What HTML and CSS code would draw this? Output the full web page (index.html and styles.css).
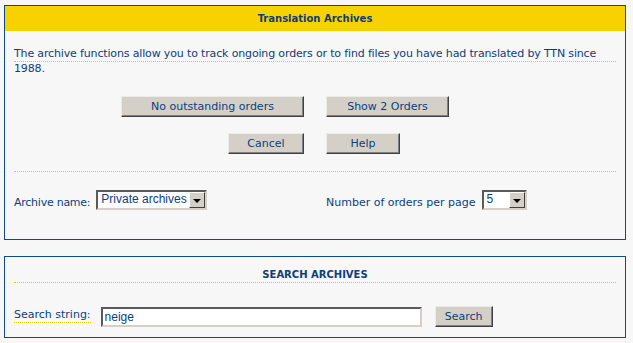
FILE: index.html
```html
<!DOCTYPE html>
<html lang="en">
<head>
    <meta charset="UTF-8">
    <title>Translation Archives</title>
    <link rel="stylesheet" href="styles.css">
</head>
<body>
    <div class="panel">
        <div class="panel-title">Translation Archives</div>
        <div class="panel-body">
            <div class="intro">The archive functions allow you to track ongoing orders or to find files you have had translated by TTN since 1988.</div>

            <div class="actions">
                <button class="btn btn-orders">No outstanding orders</button>
                <button class="btn btn-show">Show 2 Orders</button>
                <button class="btn btn-cancel">Cancel</button>
                <button class="btn btn-help">Help</button>
            </div>

            <div class="options">
                <div class="option">
                    <label class="label-archive">Archive name:</label>
                    <div class="select select-archive">
                        <span class="select-value">Private archives</span>
                        <span class="select-arrow"></span>
                    </div>
                </div>
                <div class="option">
                    <label>Number of orders per page</label>
                    <div class="select select-count">
                        <span class="select-value">5</span>
                        <span class="select-arrow"></span>
                    </div>
                </div>
            </div>
        </div>
    </div>

    <div class="panel panel-search">
        <div class="panel-body">
            <div class="search-title">SEARCH ARCHIVES</div>
            <div class="search-row">
                <label class="search-label">Search string:</label>
                <input type="text" class="search-input" value="neige">
                <button class="btn btn-search">Search</button>
            </div>
        </div>
    </div>
</body>
</html>
```

FILE: styles.css
```css
body {
    margin: 0;
    padding: 5px 0 0 4px;
    background-color: #f7f7f7;
    font-family: "DejaVu Sans", Verdana, sans-serif;
    font-size: 11px;
    color: #0c3e7e;
}
.panel {
    width: 620px;
    border: 1px solid #0a4a94;
}
.panel-title {
    height: 25px;
    line-height: 25px;
    background-color: #f8d200;
    text-align: center;
    font-size: 10px;
    font-weight: bold;
}
.panel-body {
    padding: 0 9px;
}
.intro {
    margin-top: 15px;
    height: 15px;
    line-height: 15px;
    letter-spacing: -0.15px;
    border-bottom: 1px dotted #f0c800;
}
.actions {
    display: grid;
    grid-template-columns: 1fr 1fr;
    column-gap: 22px;
    row-gap: 16px;
    padding: 34px 0 17px;
    border-bottom: 1px dotted #f0c800;
}
.btn {
    height: 21px;
    padding: 0;
    font-family: "DejaVu Sans", Verdana, sans-serif;
    font-size: 11px;
    color: #0c3e7e;
    background-color: #d4d0c8;
    border: 1px solid;
    border-color: #ecebe6 #404040 #404040 #ecebe6;
    box-shadow: inset -1px -1px #808080;
}
.btn-orders { width: 183px; justify-self: end; }
.btn-show { width: 123px; justify-self: start; }
.btn-cancel { width: 76px; justify-self: end; }
.btn-help { width: 74px; justify-self: start; }
.options {
    display: grid;
    grid-template-columns: 1fr 1fr;
    column-gap: 22px;
    padding: 18px 0 29px;
}
.option {
    display: flex;
    align-items: center;
    gap: 6px;
}
.option label {
    padding-top: 4px;
}
.label-archive {
    letter-spacing: -0.25px;
}
.select {
    display: flex;
    height: 20px;
    box-sizing: border-box;
    background-color: #fff;
    border: 2px solid;
    border-color: #5a5a5a #d4d0c8 #d4d0c8 #5a5a5a;
    font-family: "Liberation Sans", Arial, sans-serif;
    font-size: 12px;
}
.select-archive { width: 111px; }
.select-count { width: 45px; }
.select-value {
    flex: 1;
    padding-left: 3px;
    line-height: 15px;
    white-space: nowrap;
    overflow: hidden;
}
.select-arrow {
    position: relative;
    width: 14px;
    background-color: #d4d0c8;
    border: 1px solid;
    border-color: #fff #404040 #404040 #fff;
}
.select-arrow::after {
    content: "";
    position: absolute;
    left: 3px;
    top: 6px;
    border-left: 4px solid transparent;
    border-right: 4px solid transparent;
    border-top: 4px solid #000;
}
.panel-search {
    margin-top: 16px;
}
.search-title {
    margin-top: 10px;
    line-height: 15px;
    text-align: center;
    font-size: 10px;
    font-weight: bold;
    border-bottom: 1px dotted #f0c800;
}
.search-row {
    display: flex;
    align-items: flex-start;
    padding: 23px 0 10px;
}
.search-label {
    margin-right: 10px;
    padding-top: 2px;
    line-height: 14px;
    border-bottom: 1px dotted #f0c800;
}
.search-input {
    width: 321px;
    height: 20px;
    box-sizing: border-box;
    margin: 1px 13px 0 0;
    padding: 0 2px;
    font-family: "Liberation Sans", Arial, sans-serif;
    font-size: 12px;
    color: #0c3e7e;
    background-color: #fff;
    border: 2px solid;
    border-color: #5a5a5a #d4d0c8 #d4d0c8 #5a5a5a;
    outline: none;
}
.btn-search {
    width: 58px;
}
```
